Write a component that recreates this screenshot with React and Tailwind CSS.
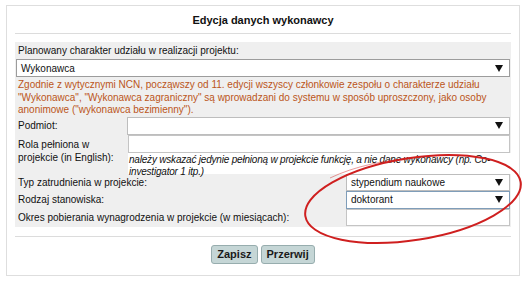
import React from "react";

function Arrow() {
  return (
    <svg width="8" height="7" viewBox="0 0 8 7" className="shrink-0">
      <polygon points="0,0 8,0 4,7" fill="#111" />
    </svg>
  );
}

function Select({ value, className = "" }) {
  return (
    <div
      className={`bg-white border flex items-center justify-between pl-[4px] pr-[6px] ${className}`}
    >
      <span>{value}</span>
      <Arrow />
    </div>
  );
}

export default function App() {
  return (
    <div className="relative w-[527px] h-[285px] bg-white text-[10px] text-[#111] font-['Liberation_Sans',Arial,sans-serif] overflow-hidden">
      <div className="pt-[5px] pl-[6px]">
        <div className="w-[514px] h-[271px] border border-[#dedede] flex flex-col px-[8px]">
          <div className="h-[28px] border-b border-[#dcdcdc] flex items-center justify-center font-bold text-[11px] pt-[2px]">
            Edycja danych wykonawcy
          </div>

          <div className="mt-[8px] bg-[#efefef] flex flex-col pb-[1px]">
            <div className="h-[16px] flex items-center pl-[3px]">
              Planowany charakter udziału w realizacji projektu:
            </div>
            <Select
              value="Wykonawca"
              className="h-[18px] mx-[1px] mt-[1px] border-[#9c9c9c]"
            />
            <div className="text-[#bb5520] leading-[12.5px] pl-[3px] pr-[12px] pt-[2px]">
              Zgodnie z wytycznymi NCN, począwszy od 11. edycji wszyscy członkowie zespołu o charakterze udziału "Wykonawca", "Wykonawca zagraniczny" są wprowadzani do systemu w sposób uproszczony, jako osoby anonimowe ("wykonawca bezimienny").
            </div>

            <div className="flex items-center">
              <div className="w-[112px] pl-[3px]">Podmiot:</div>
              <Select value="" className="h-[18px] flex-1 mr-[1px] border-[#bdbdbd]" />
            </div>

            <div className="flex">
              <div className="w-[113px] pl-[3px] pt-[3px] leading-[13px]">
                Rola pełniona w
                <br />
                projekcie (in English):
              </div>
              <div className="flex-1 flex flex-col">
                <div className="h-[18px] mr-[1px] bg-white border border-[#c4c4c4]" />
                <div className="h-[21px] bg-white italic leading-[12px] pl-[1px] pt-[1px] tracking-[-0.2px]">
                  należy wskazać jedynie pełnioną w projekcie funkcję, a nie dane wykonawcy (np. Co-
                  <br />
                  investigator 1 itp.)
                </div>
              </div>
            </div>

            <div className="flex items-center">
              <div className="w-[331px] pl-[3px]">Typ zatrudnienia w projekcie:</div>
              <Select
                value="stypendium naukowe"
                className="h-[17px] flex-1 mr-[1px] border-[#bdbdbd]"
              />
            </div>
            <div className="flex items-center">
              <div className="w-[331px] pl-[3px]">Rodzaj stanowiska:</div>
              <Select
                value="doktorant"
                className="h-[18px] flex-1 mr-[1px] border-[#7f9db9]"
              />
            </div>
            <div className="flex items-center">
              <div className="w-[331px] pl-[3px]">
                Okres pobierania wynagrodzenia w projekcie (w miesiącach):
              </div>
              <div className="flex-1 h-[17px] mr-[1px] bg-white border border-[#c4c4c4]" />
            </div>
          </div>

          <div className="mt-[9px] border-t border-[#dcdcdc] flex justify-center gap-[3px] pt-[8px]">
            <button className="h-[19px] px-[5px] rounded-[3px] bg-[#c5d6d6] border border-[#97adae] font-bold text-[11px] text-[#1a1a1a]">
              Zapisz
            </button>
            <button className="h-[19px] px-[5px] rounded-[3px] bg-[#c5d6d6] border border-[#97adae] font-bold text-[11px] text-[#1a1a1a]">
              Przerwij
            </button>
          </div>
        </div>
      </div>

      <svg
        className="absolute inset-0 pointer-events-none"
        width="527"
        height="285"
        viewBox="0 0 527 285"
      >
        <ellipse
          cx="413"
          cy="199"
          rx="109"
          ry="41"
          transform="rotate(-9 413 199)"
          fill="none"
          stroke="#cf1f1f"
          strokeWidth="2"
        />
        <path
          d="M330 178 C 355 166, 385 160, 420 157"
          fill="none"
          stroke="#cf1f1f"
          strokeWidth="1"
          opacity="0.45"
        />
      </svg>
    </div>
  );
}
